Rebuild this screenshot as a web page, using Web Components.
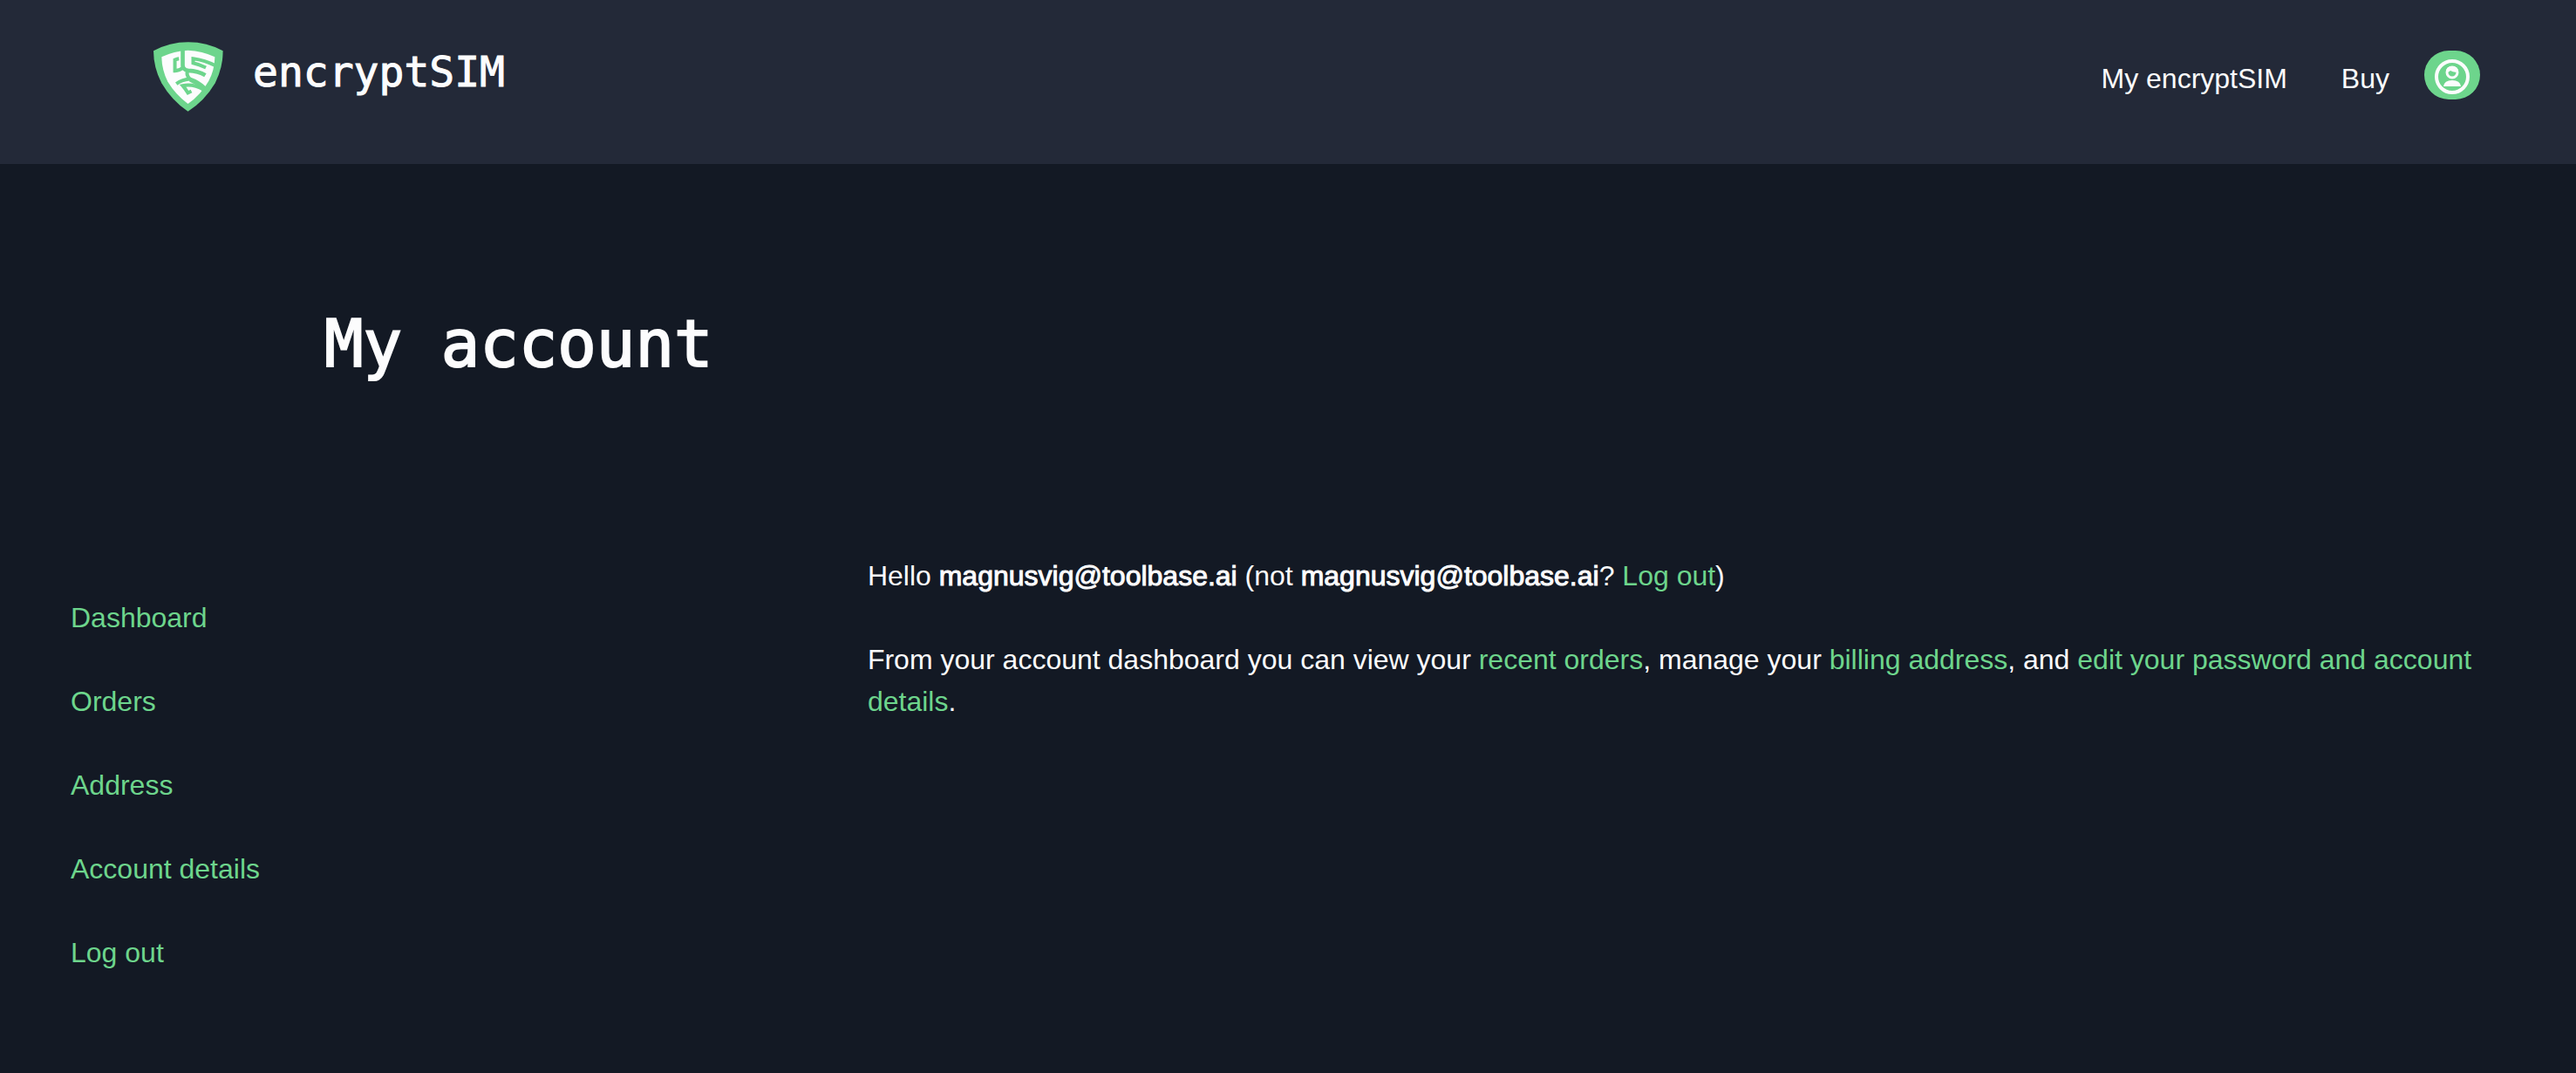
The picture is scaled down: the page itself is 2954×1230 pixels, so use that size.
<!DOCTYPE html>
<html lang="en">
<head>
<meta charset="utf-8">
<meta name="viewport" content="width=device-width, initial-scale=1">
<title>My account - encryptSIM</title>
<style>
  :root {
    --bg: #131924;
    --bar: #232938;
    --text: #fcfcfd;
    --accent: #6dd58c;
    --mono: "DejaVu Sans Mono", monospace;
  }
  body {
    margin: 0;
    min-height: 100vh;
    background: var(--bg);
    color: var(--text);
    font: 32px/48px "Liberation Sans", Arial, sans-serif;
  }
</style>
</head>
<body>
<site-header>
  <brand-logo slot="brand">encryptSIM</brand-logo>
  <nav-link href="#my">My encryptSIM</nav-link>
  <nav-link href="#buy">Buy</nav-link>
  <account-button slot="action"></account-button>
</site-header>

<account-page>
  <page-title slot="title">My account</page-title>
  <side-nav slot="nav">
    <nav-link accent href="#dashboard">Dashboard</nav-link>
    <nav-link accent href="#orders">Orders</nav-link>
    <nav-link accent href="#address">Address</nav-link>
    <nav-link accent href="#details">Account details</nav-link>
    <nav-link accent href="#logout">Log out</nav-link>
  </side-nav>
  <account-welcome user="magnusvig@toolbase.ai"></account-welcome>
</account-page>

<script>
class BaseElement extends HTMLElement {
  constructor() {
    super();
    this.attachShadow({ mode: 'open' });
  }
  connectedCallback() { this.shadowRoot.innerHTML = this.template(); }

  escape(s) {
    return s.replaceAll('&','&amp;').replaceAll('<','&lt;').replaceAll('"','&quot;');
  }
}

class SiteHeader extends BaseElement {
  template() {
    return `
      <style>
        :host { display: block; background: var(--bar); }
        header {
          display: flex;
          justify-content: space-between;
          align-items: flex-start;
          padding: 48px 110px 60px 176px;
        }
        nav { display: flex; gap: 62px; padding-top: 18px; }
        .right { display: flex; gap: 40px; }
        .action { padding-top: 10px; }
      </style>
      <header>
        <slot name="brand"></slot>
        <div class="right">
          <nav aria-label="Main"><slot></slot></nav>
          <div class="action"><slot name="action"></slot></div>
        </div>
      </header>
    `;
  }
}
customElements.define('site-header', SiteHeader);

class BrandLogo extends BaseElement {
  template() {
    return `
      <style>
        :host { display: block; }
        a {
          display: flex;
          gap: 34px;
          color: inherit;
          text-decoration: none;
          font: 48px/68px var(--mono);
        }
        span { -webkit-text-stroke: 1px currentColor; }
        svg { width: 80px; height: 80px; }
      </style>
      <a href="#home">
        <svg viewBox="49 53 241 241" aria-hidden="true">
          <path fill="#6dd58c" d="M49 84Q105 54 169 54Q233 54 289 84Q289 142 262 195Q226 256 168 293Q112 255 77 195Q49 142 49 84Z"/>
          <path fill="#fcfcfd" d="M77 105Q120 84 168 82Q218 84 261 105Q260 150 240 188Q212 237 168 267Q125 235 98 190Q78 150 77 105Z"/>
          <g fill="none" stroke="#6dd58c" stroke-width="12">
            <path stroke-width="14" d="M150 76V134Q150 148 168 152Q205 154 228 168"/>
            <path d="M137 111Q130 112 123 115V153Q140 152 150 142"/>
            <path d="M265 136Q226 116 186 111V126Q206 130 230 142"/>
            <path stroke-linejoin="round" d="M128 198Q146 184 174 181Q206 192 228 214"/>
            <path d="M168 152Q160 166 174 181"/>
            <path d="M180 223L168 229Q160 216 150 204Q186 196 222 218"/>
            <path stroke-width="8" d="M174 186L216 208"/>
          </g>
        </svg>
        <span><slot></slot></span>
      </a>
    `;
  }
}
customElements.define('brand-logo', BrandLogo);

class NavLink extends BaseElement {
  template() {
    return `
      <style>
        :host { display: block; }
        :host([accent]) { color: var(--accent); }
        a { color: inherit; text-decoration: none; }
        a:hover { text-decoration: underline; }
      </style>
      <a href="${this.escape(this.getAttribute('href') || '#')}"><slot></slot></a>
    `;
  }
}
customElements.define('nav-link', NavLink);

class AccountButton extends BaseElement {
  template() {
    return `
      <style>
        :host { display: block; }
        button {
          display: flex;
          align-items: center;
          justify-content: center;
          width: 64px;
          height: 56px;
          padding: 4px 0 0;
          border: 0;
          border-radius: 28px;
          background: var(--accent);
          cursor: pointer;
        }
        svg { width: 40px; height: 40px; }
      </style>
      <button type="button" aria-label="Account">
        <svg viewBox="0 0 40 40" fill="none" aria-hidden="true">
          <circle cx="20" cy="20" r="18" stroke="#fcfcfd" stroke-width="4"/>
          <circle cx="20" cy="15" r="6" stroke="#fcfcfd" stroke-width="3"/>
          <path fill="#fcfcfd" d="M13 14Q13 8 20 8Q27 8 27 14Q23 16 18 13Q16 15 13 15Z"/>
          <path fill="#fcfcfd" d="M10 31Q11 24 20 24Q29 24 30 31Z"/>
        </svg>
      </button>
    `;
  }
}
customElements.define('account-button', AccountButton);

class AccountPage extends BaseElement {
  template() {
    return `
      <style>
        :host { display: block; }
        .title { padding: 158px 12% 194px 372px; }
        .columns {
          display: grid;
          grid-template-columns: 30% 1fr;
          gap: 76px;
          padding: 0 80px 0 81px;
        }
      </style>
      <main>
        <div class="title"><slot name="title"></slot></div>
        <div class="columns">
          <slot name="nav"></slot>
          <slot></slot>
        </div>
      </main>
    `;
  }
}
customElements.define('account-page', AccountPage);

class PageTitle extends BaseElement {
  template() {
    return `
      <style>
        :host { display: block; }
        h1 {
          margin: 0;
          font: 74px/96px var(--mono);
          -webkit-text-stroke: 2px currentColor;
        }
      </style>
      <h1><slot></slot></h1>
    `;
  }
}
customElements.define('page-title', PageTitle);

class SideNav extends BaseElement {
  template() {
    return `
      <style>
        :host { display: block; }
        nav { display: flex; flex-direction: column; gap: 48px; padding: 48px 0; }
      </style>
      <nav aria-label="Account"><slot></slot></nav>
    `;
  }
}
customElements.define('side-nav', SideNav);

class AccountWelcome extends BaseElement {
  template() {
    const user = this.escape(this.getAttribute('user') || '');
    return `
      <style>
        :host { display: block; }
        p { margin: 0 0 48px; }
        a { color: var(--accent); text-decoration: none; }
        strong { font-weight: 400; -webkit-text-stroke: 1px currentColor; }
      </style>
      <p>Hello <strong>${user}</strong> (not <strong>${user}</strong>? <a href="#logout">Log out</a>)</p>
      <p>From your account dashboard you can view your <a href="#orders">recent orders</a>, manage your <a href="#address">billing address</a>, and <a href="#details">edit your password and account details</a>.</p>
    `;
  }
}
customElements.define('account-welcome', AccountWelcome);
</script>
</body>
</html>
